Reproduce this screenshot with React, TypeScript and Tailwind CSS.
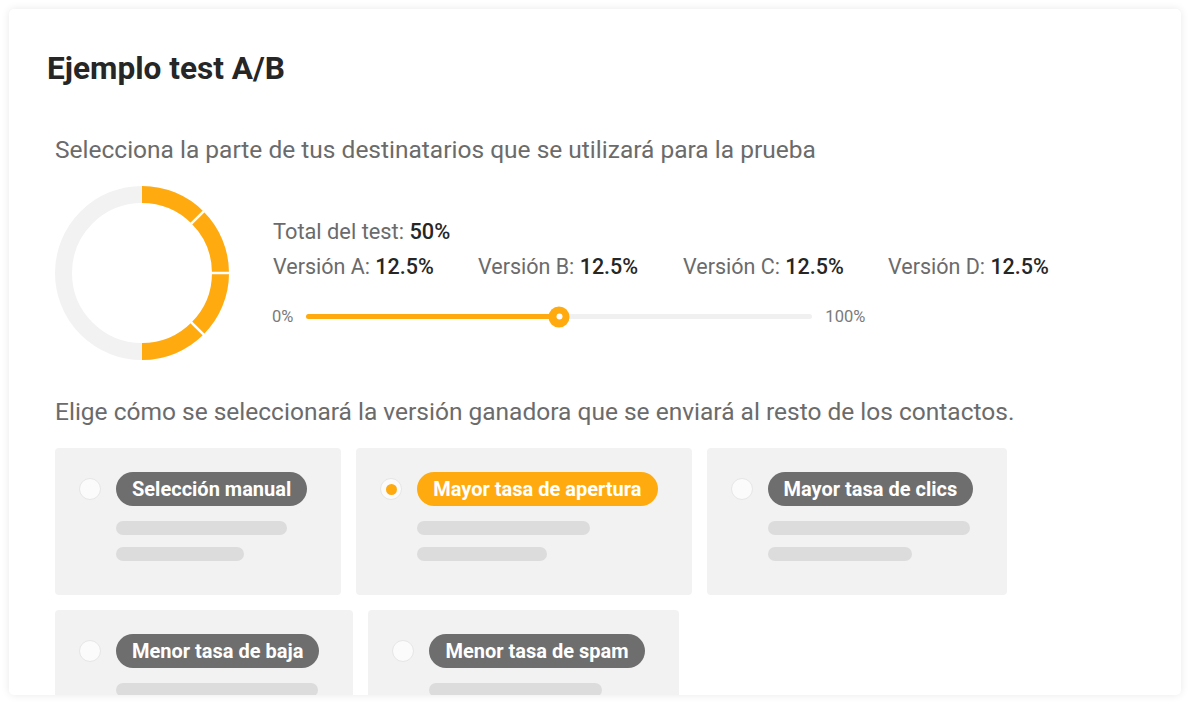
import React from "react";

const ORANGE = "#ffab0f";

const versions = [
  { label: "Versión A:", value: "12.5%" },
  { label: "Versión B:", value: "12.5%" },
  { label: "Versión C:", value: "12.5%" },
  { label: "Versión D:", value: "12.5%" },
];

type Option = {
  label: string;
  selected?: boolean;
  bars: [number, number];
};

const options: Option[] = [
  { label: "Selección manual", bars: [171, 128] },
  { label: "Mayor tasa de apertura", selected: true, bars: [173, 130] },
  { label: "Mayor tasa de clics", bars: [202, 144] },
  { label: "Menor tasa de baja", bars: [202, 144] },
  { label: "Menor tasa de spam", bars: [173, 130] },
];

function point(cx: number, cy: number, r: number, deg: number) {
  const rad = (deg * Math.PI) / 180;
  return [cx + r * Math.sin(rad), cy - r * Math.cos(rad)];
}

function sector(cx: number, cy: number, r0: number, r1: number, a0: number, a1: number) {
  const [ox0, oy0] = point(cx, cy, r1, a0);
  const [ox1, oy1] = point(cx, cy, r1, a1);
  const [ix1, iy1] = point(cx, cy, r0, a1);
  const [ix0, iy0] = point(cx, cy, r0, a0);
  return `M${ox0} ${oy0} A${r1} ${r1} 0 0 1 ${ox1} ${oy1} L${ix1} ${iy1} A${r0} ${r0} 0 0 0 ${ix0} ${iy0} Z`;
}

function Donut() {
  const c = 87;
  const r0 = 70;
  const r1 = 87;
  return (
    <svg width="174" height="174" viewBox="0 0 174 174" className="shrink-0">
      <circle cx={c} cy={c} r={78.5} fill="none" stroke="#f2f2f2" strokeWidth={17} />
      {[0, 1, 2, 3].map((i) => (
        <path key={i} d={sector(c, c, r0, r1, i * 45, (i + 1) * 45)} fill={ORANGE} />
      ))}
      {[45, 90, 135].map((a) => {
        const [x0, y0] = point(c, c, r0 - 1, a);
        const [x1, y1] = point(c, c, r1 + 1, a);
        return <line key={a} x1={x0} y1={y0} x2={x1} y2={y1} stroke="#fff" strokeWidth={2.5} />;
      })}
    </svg>
  );
}

function OptionCard({ option }: { option: Option }) {
  return (
    <div className="flex gap-[15px] rounded-[4px] bg-[#f2f2f2] pt-[24px] pb-[34px] pl-[24px] pr-[34px]">
      <div className="flex h-[34px] items-center">
        <span className="flex h-[22px] w-[22px] items-center justify-center rounded-full border border-[#e6e6e6] bg-[#fbfbfb]">
          {option.selected && <span className="h-[11px] w-[11px] rounded-full bg-[#ffab0f]" />}
        </span>
      </div>
      <div className="flex flex-col">
        <span
          className={`flex h-[34px] items-center rounded-full px-[16px] text-[20px] font-bold text-white ${
            option.selected ? "bg-[#ffab0f]" : "bg-[#6e6e6e]"
          }`}
        >
          {option.label}
        </span>
        <span className="mt-[15px] h-[14px] rounded-full bg-[#dcdcdc]" style={{ width: option.bars[0] }} />
        <span className="mt-[12px] h-[14px] rounded-full bg-[#dcdcdc]" style={{ width: option.bars[1] }} />
      </div>
    </div>
  );
}

export default function App() {
  return (
    <div className="min-h-[704px] bg-white p-[9px] font-['Roboto',sans-serif]">
      <div className="h-[686px] overflow-hidden rounded-[5px] bg-white pt-[42px] pl-[38px] pr-[38px] shadow-[0_0_8px_rgba(0,0,0,0.09)]">
        <h1 className="text-[31.6px] leading-[36px] font-bold text-[#262626]">Ejemplo test A/B</h1>

        <div className="pl-[8px]">
          <p className="mt-[49px] text-[24.5px] leading-[28px] text-[#6b6b6b]">
            Selecciona la parte de tus destinatarios que se utilizará para la prueba
          </p>

          <div className="mt-[22px] flex items-start gap-[44px]">
            <Donut />
            <div className="mt-[32px] flex flex-col">
              <p className="text-[21.8px] leading-[28px] text-[#6b6b6b]">
                Total del test: <span className="font-medium text-[#262626]">50%</span>
              </p>
              <div className="mt-[7px] flex">
                {versions.map((v) => (
                  <p key={v.label} className="w-[205px] text-[21.5px] leading-[28px] text-[#6b6b6b]">
                    {v.label} <span className="font-medium text-[#262626]">{v.value}</span>
                  </p>
                ))}
              </div>
              <div className="mt-[23.5px] flex items-center gap-[13px] text-[16.5px] text-[#7a7a7a]">
                <span className="-ml-[1px]">0%</span>
                <div className="relative h-[5px] w-[506px] rounded-full bg-[#f0f0f0]">
                  <div className="h-full w-1/2 rounded-full bg-[#ffab0f]" />
                  <div className="absolute top-1/2 left-1/2 flex h-[21px] w-[21px] -translate-x-1/2 -translate-y-1/2 items-center justify-center rounded-full bg-[#ffab0f]">
                    <span className="h-[6px] w-[6px] rounded-full bg-white" />
                  </div>
                </div>
                <span>100%</span>
              </div>
            </div>
          </div>

          <p className="mt-[38px] text-[24.5px] leading-[28px] text-[#6b6b6b]">
            Elige cómo se seleccionará la versión ganadora que se enviará al resto de los contactos.
          </p>

          <div className="mt-[22px] flex flex-wrap items-start gap-[15px]">
            {options.map((o) => (
              <OptionCard key={o.label} option={o} />
            ))}
          </div>
        </div>
      </div>
    </div>
  );
}
